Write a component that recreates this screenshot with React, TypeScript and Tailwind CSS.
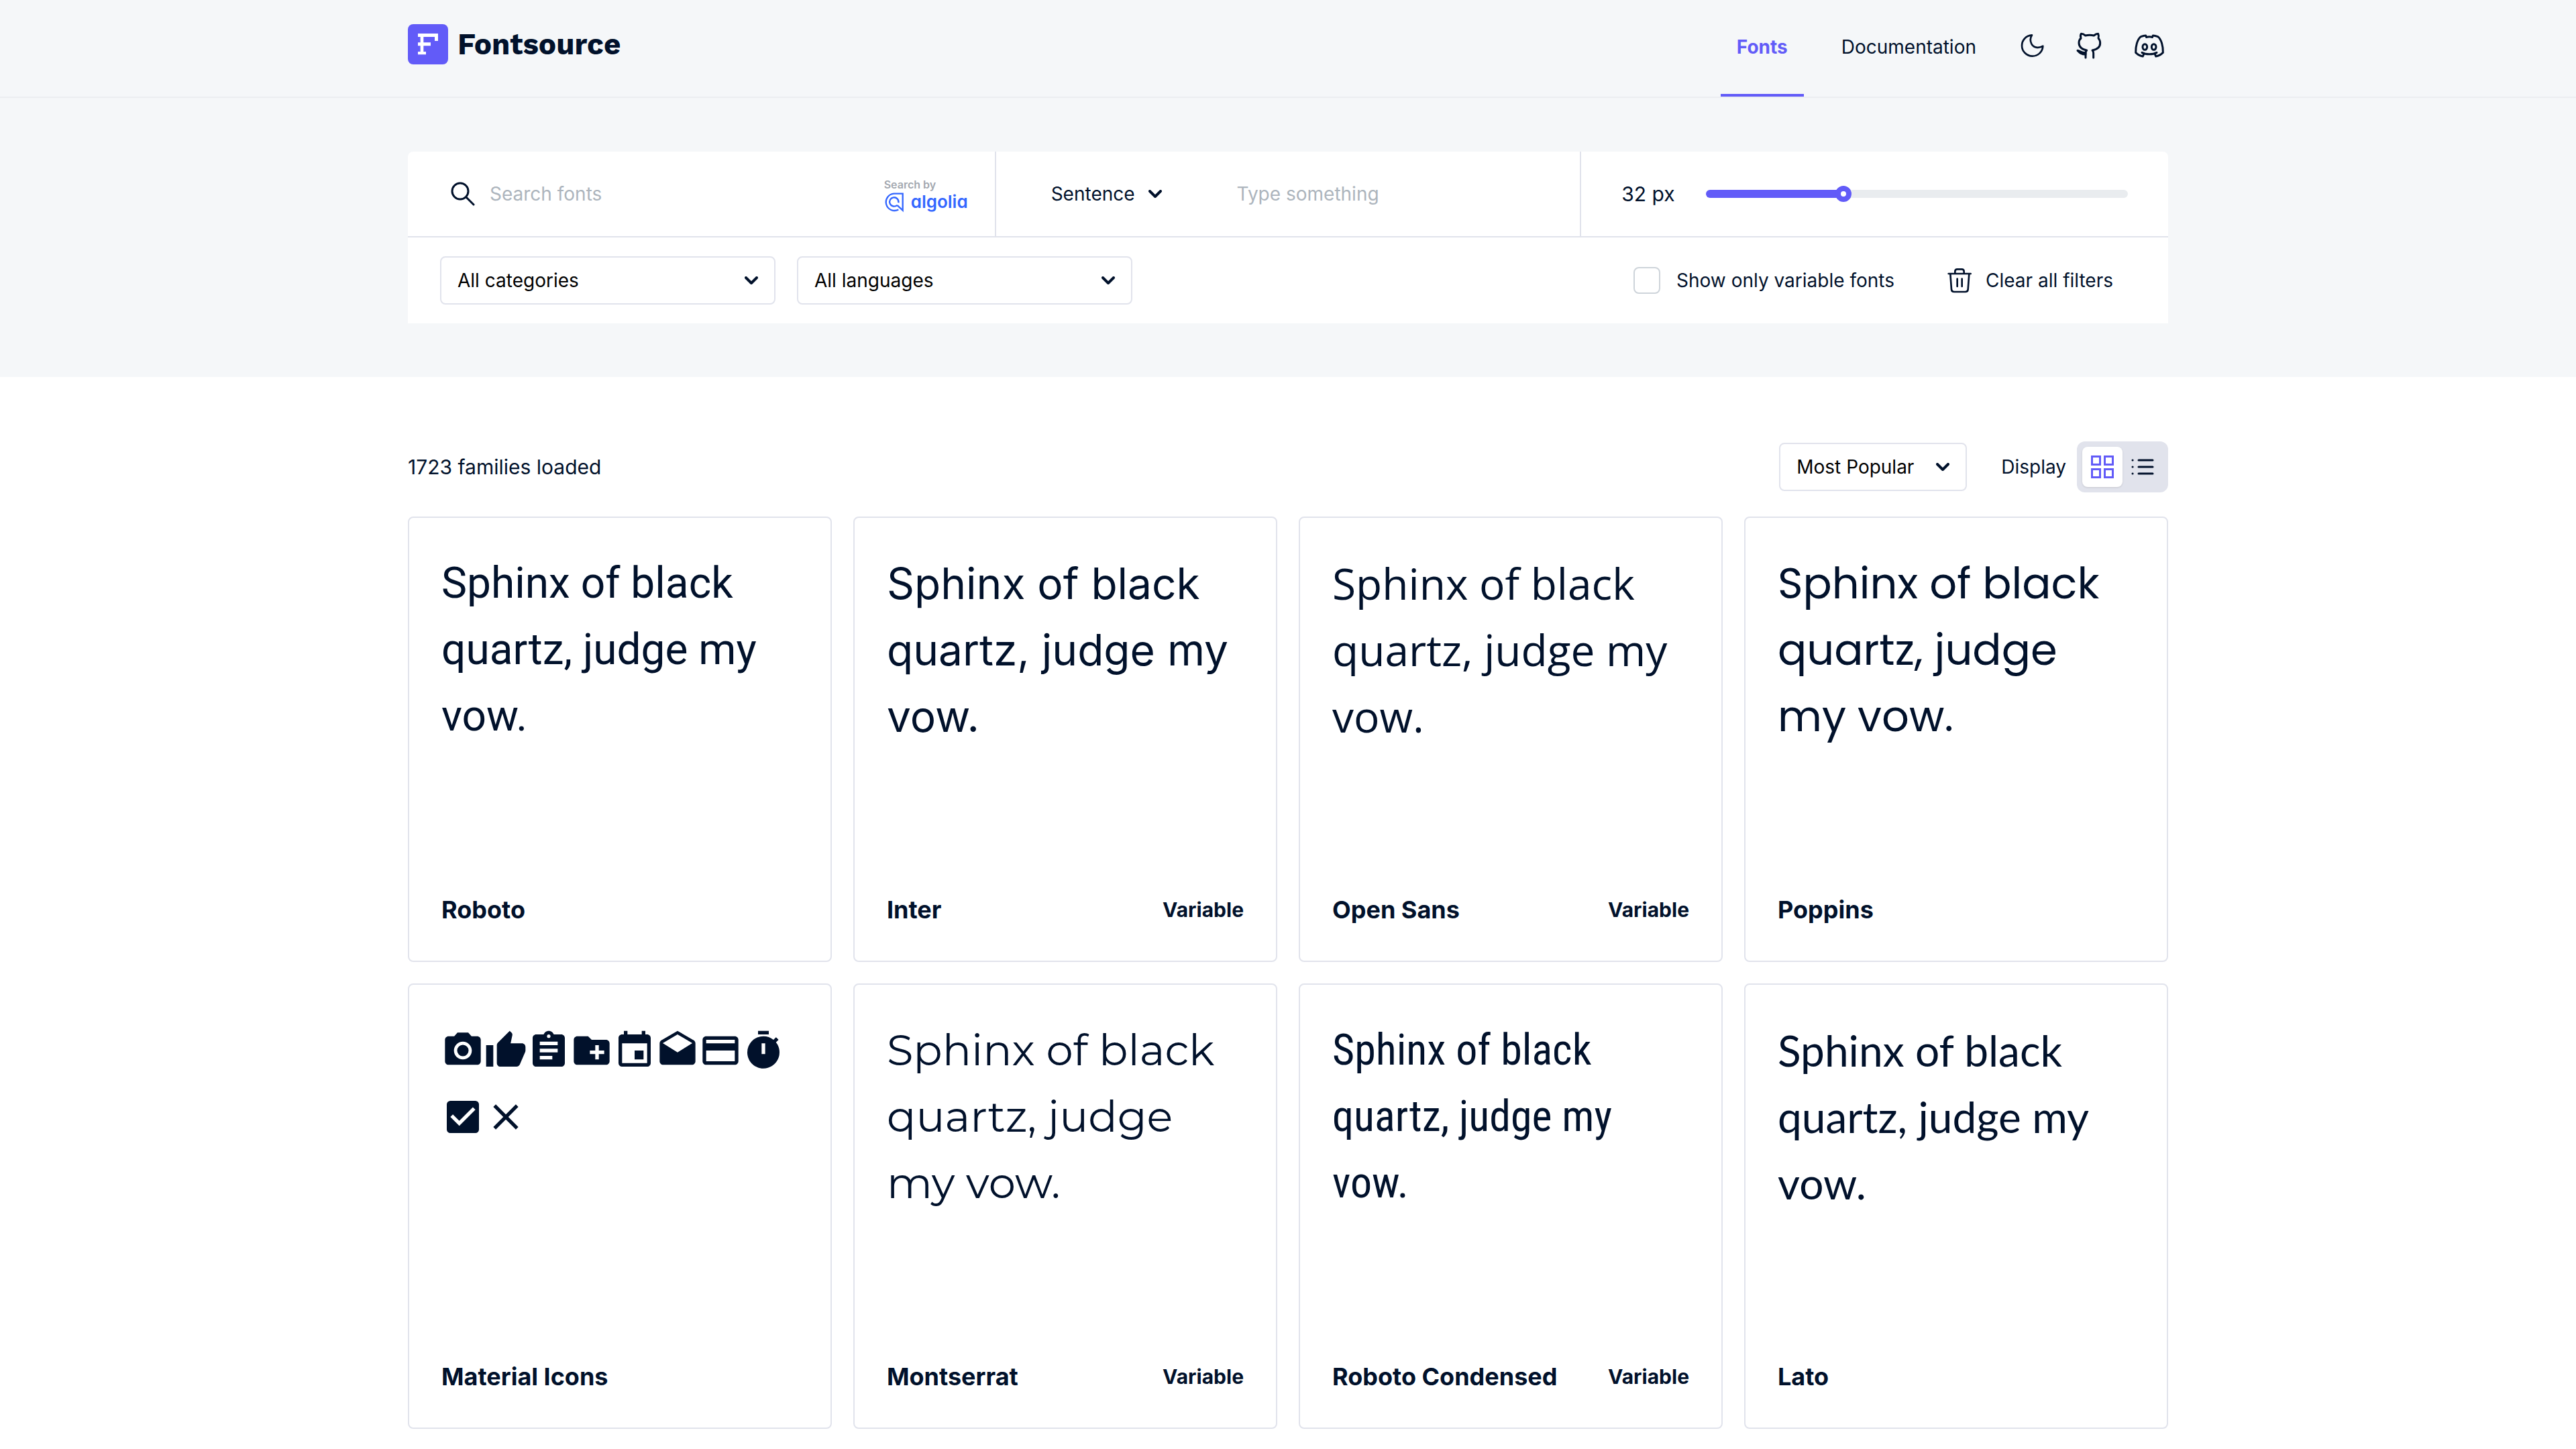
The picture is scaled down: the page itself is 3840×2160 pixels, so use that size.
import type { ReactNode } from "react";
import {
  MdAssignment,
  MdCameraAlt,
  MdCheckBox,
  MdClose,
  MdCreateNewFolder,
  MdDrafts,
  MdEvent,
  MdPayment,
  MdThumbUp,
  MdTimer,
} from "react-icons/md";

function Chevron({ className = "" }: { className?: string }) {
  return (
    <svg viewBox="0 0 20 12" className={`w-5 h-3 ${className}`} fill="none" stroke="#01112b" strokeWidth="4" strokeLinecap="round" strokeLinejoin="round" aria-hidden="true">
      <path d="M2 2l8 8 8-8" />
    </svg>
  );
}

function LogoMark() {
  return (
    <svg viewBox="0 0 180 180" className="size-15" aria-hidden="true">
      <rect width="180" height="180" rx="24" fill="#625bf8" />
      <path
        fill="#fff"
        d="M45 42H135V75H120V57H70V82H102V97H70V123H81V136H45V123H56V97H45V82H56V57H45Z"
      />
    </svg>
  );
}

function MoonIcon() {
  return (
    <svg viewBox="60 60 108 108" className="size-9" fill="none" stroke="currentColor" strokeWidth="8" strokeLinejoin="round" aria-hidden="true">
      <path d="M111 67A47 47 0 1 0 160 116C140 128 118 123 109 106C102 92 104 78 111 67Z" />
    </svg>
  );
}

function GithubIcon() {
  return (
    <svg viewBox="318 45 120 126" className="w-10 h-[42px]" fill="none" stroke="currentColor" strokeWidth="9" strokeLinecap="round" strokeLinejoin="round" aria-hidden="true">
      <path d="M363 162V141C363 137 363 133 368 129C343 124 333 110 333 95C333 86 336 80 342 75C339 67 340 60 343 55C350 55 357 59 362 63C374 60 388 60 400 63C406 58 413 55 419 55C422 62 422 68 420 75C426 81 428 87 428 97C428 113 415 125 393 129C398 133 398 137 398 142V162" />
      <path d="M327 130C338 131 341 140 363 140V147C343 147 338 141 327 130Z" fill="currentColor" />
    </svg>
  );
}

function DiscordIcon() {
  return (
    <svg viewBox="570 52 144 111" className="w-12 h-[37px]" fill="none" stroke="currentColor" strokeWidth="9" strokeLinecap="round" strokeLinejoin="round" aria-hidden="true">
      <path d="M629 68L626 61C618 61 611 63 604 66C588 78 580 110 581 137C590 146 602 152 613 154L617 144" />
      <path d="M655 68L658 61C666 61 673 63 680 66C696 78 704 110 703 137C694 146 682 152 671 154L667 144" />
      <path d="M629 68C637 66 647 66 655 68" />
      <path d="M609 137C626 147 658 147 675 137" />
      <ellipse cx="622" cy="112" rx="10" ry="13" />
      <ellipse cx="662" cy="112" rx="10" ry="13" />
    </svg>
  );
}

function SearchIcon() {
  return (
    <svg viewBox="0 0 36 36" className="size-9" fill="none" stroke="currentColor" strokeWidth="3" strokeLinecap="round" aria-hidden="true">
      <circle cx="14" cy="14" r="12" />
      <path d="M23 23L34 34" />
    </svg>
  );
}

function TrashIcon() {
  return (
    <svg viewBox="66 54 114 120" className="w-[38px] h-10" fill="none" stroke="currentColor" strokeWidth="8" strokeLinecap="round" strokeLinejoin="round" aria-hidden="true">
      <path d="M74 84H173M82 84L87 154Q88 165 99 165H149Q160 165 161 154L166 84M103 82V74Q103 64 113 64H133Q143 64 143 74V82M113 107V141M134 107V141" />
    </svg>
  );
}

function AlgoliaMark() {
  return (
    <svg viewBox="54 92 90 92" className="w-[30px] h-[31px]" fill="none" stroke="#3366ff" strokeWidth="7" aria-hidden="true">
      <path d="M118 171A38 38 0 1 1 98 99.500H137V174L112 151" />
      <path d="M112 151A20 20 0 1 1 118 140" />
    </svg>
  );
}

function GridIcon() {
  return (
    <svg viewBox="0 0 34 34" className="size-[34px]" fill="none" stroke="#625bf8" strokeWidth="3" aria-hidden="true">
      <rect x="1.500" y="1.500" width="12" height="12" />
      <rect x="20.500" y="1.500" width="12" height="12" />
      <rect x="1.500" y="20.500" width="12" height="12" />
      <rect x="20.500" y="20.500" width="12" height="12" />
    </svg>
  );
}

function ListIcon() {
  return (
    <svg viewBox="0 0 34 34" className="size-[34px]" fill="none" stroke="currentColor" strokeWidth="3" strokeLinecap="round" aria-hidden="true">
      <path d="M11 7H32M11 17H32M11 27H32" />
      <path d="M2 7h.1M2 17h.1M2 27h.1" />
    </svg>
  );
}

function SelectBox({ label, value, className }: { label: string; value: string; className: string }) {
  return (
    <div className={`relative ${className}`}>
      <select aria-label={label} className="w-full h-18 appearance-none rounded-lg border-2 border-[#e1e3ec] bg-white pl-6 pr-14 text-[28px] text-black">
        <option>{value}</option>
      </select>
      <Chevron className="pointer-events-none absolute right-[26px] top-[30px]" />
    </div>
  );
}

function FontCard({ name, variable, children }: { name: string; variable?: boolean; children: ReactNode }) {
  return (
    <a href={`#${name}`} className="flex min-h-[664px] flex-col justify-between rounded-lg border-2 border-[#e1e3ec] bg-white p-12">
      <div className="text-[64px] leading-[99px]">{children}</div>
      <div className="flex items-center justify-between font-bold leading-14">
        <h2 className="text-[36px]">{name}</h2>
        {variable && <span className="text-[30px]">Variable</span>}
      </div>
    </a>
  );
}

const iconRows = [
  [MdCameraAlt, MdThumbUp, MdAssignment, MdCreateNewFolder, MdEvent, MdDrafts, MdPayment, MdTimer],
  [MdCheckBox, MdClose],
];

const sampleWide = (
  <>
    Sphinx of black
    <br />
    quartz, judge my
    <br />
    vow.
  </>
);

const sampleNarrow = (
  <>
    Sphinx of black
    <br />
    quartz, judge
    <br />
    my vow.
  </>
);

export default function App() {
  return (
    <div className="min-h-screen bg-white font-['Inter',sans-serif] text-[28px] text-[#01112b]">
      <header className="border-b-2 border-[#eceef1] bg-[#f5f7f9]">
        <div className="mx-auto flex h-36 w-full max-w-[2624px] items-stretch justify-between">
          <a href="#home" className="flex items-center gap-3.5 pb-3">
            <LogoMark />
            <span className="font-['Work_Sans','Inter',sans-serif] text-[44px] font-bold leading-none">Fontsource</span>
          </a>
          <nav className="flex items-stretch">
            <a href="#fonts" className="flex items-center border-b-4 border-[#625bf8] px-6 font-bold text-[#625bf8]">
              Fonts
            </a>
            <a href="#documentation" className="flex items-center pl-14 pr-[66px] pb-1">
              Documentation
            </a>
            <div className="flex items-center gap-[46px] pr-1 pb-2">
              <button type="button" aria-label="Toggle dark mode">
                <MoonIcon />
              </button>
              <a href="#github" aria-label="GitHub">
                <GithubIcon />
              </a>
              <a href="#discord" aria-label="Discord">
                <DiscordIcon />
              </a>
            </div>
          </nav>
        </div>
      </header>

      <section className="bg-[#f5f7f9] py-20">
        <div className="mx-auto w-full max-w-[2624px] rounded-t-lg bg-white">
          <div className="grid grid-cols-3 border-b-2 border-[#e1e3ec]">
            <div className="flex h-[126px] items-center pl-16 pr-10">
              <SearchIcon />
              <input type="text" aria-label="Search fonts" placeholder="Search fonts" className="min-w-0 flex-1 bg-transparent pl-[22px] outline-none placeholder:text-[#adb5bd]" />
              <a href="#algolia" className="flex flex-col pt-1">
                <span className="text-[16px] font-semibold leading-5 text-[#a3a8b0]">Search by</span>
                <span className="flex items-center gap-2.5">
                  <AlgoliaMark />
                  <span className="text-[26px] font-semibold leading-8 text-[#3366ff] [font-feature-settings:'cv11']">algolia</span>
                </span>
              </a>
            </div>
            <div className="flex h-[126px] items-center border-x-2 border-[#e1e3ec] pl-[78px]">
              <button type="button" className="flex items-center gap-5 pl-1">
                Sentence
                <Chevron />
              </button>
              <input type="text" aria-label="Preview text" placeholder="Type something" className="ml-28 min-w-0 flex-1 bg-transparent outline-none placeholder:text-[#adb5bd]" />
            </div>
            <div className="flex h-[126px] items-center gap-[46px] pl-15 pr-15">
              <label htmlFor="size" className="whitespace-nowrap text-[30px]">
                32 px
              </label>
              <input
                id="size"
                type="range"
                min="0"
                max="100"
                defaultValue="32"
                className="h-6 min-w-0 flex-1 appearance-none bg-transparent [&::-webkit-slider-runnable-track]:h-3 [&::-webkit-slider-runnable-track]:rounded-full [&::-webkit-slider-runnable-track]:bg-[linear-gradient(to_right,#625bf8_33%,#e9ecef_33%)] [&::-webkit-slider-thumb]:-mt-1.5 [&::-webkit-slider-thumb]:size-6 [&::-webkit-slider-thumb]:appearance-none [&::-webkit-slider-thumb]:rounded-full [&::-webkit-slider-thumb]:border-8 [&::-webkit-slider-thumb]:border-[#625bf8] [&::-webkit-slider-thumb]:bg-white"
              />
            </div>
          </div>
          <div className="flex h-32 items-center justify-between pl-12 pr-[82px]">
            <div className="flex gap-8">
              <SelectBox label="Category" value="All categories" className="w-[500px]" />
              <SelectBox label="Language" value="All languages" className="w-[500px]" />
            </div>
            <div className="flex items-center gap-[78px]">
              <label className="flex items-center gap-6">
                <input type="checkbox" className="size-10 appearance-none rounded-lg border-2 border-[#ced4da] bg-white" />
                Show only variable fonts
              </label>
              <button type="button" className="flex items-center gap-5">
                <TrashIcon />
                Clear all filters
              </button>
            </div>
          </div>
        </div>
      </section>

      <main className="mx-auto w-full max-w-[2624px] pt-24 pb-7">
        <div className="flex items-center justify-between">
          <p className="text-[30px]">1723 families loaded</p>
          <div className="flex items-center">
            <SelectBox label="Sort" value="Most Popular" className="w-[280px]" />
            <span className="pl-[51px] pr-4">Display</span>
            <div className="flex rounded-xl bg-[#e1e3ec] p-2">
              <button type="button" aria-label="Grid view" className="flex size-15 items-center justify-center rounded-lg bg-white shadow">
                <GridIcon />
              </button>
              <button type="button" aria-label="List view" className="flex size-15 items-center justify-center">
                <ListIcon />
              </button>
            </div>
          </div>
        </div>

        <div className="mt-9 grid grid-cols-4 gap-8">
          <FontCard name="Roboto">
            <p className="font-['Roboto',sans-serif]">{sampleWide}</p>
          </FontCard>
          <FontCard name="Inter" variable>
            <p>{sampleWide}</p>
          </FontCard>
          <FontCard name="Open Sans" variable>
            <p className="font-['Open_Sans',sans-serif]">{sampleWide}</p>
          </FontCard>
          <FontCard name="Poppins">
            <p className="font-['Poppins','Inter',sans-serif]">{sampleNarrow}</p>
          </FontCard>
          <FontCard name="Material Icons">
            {iconRows.map((row, index) => (
              <div key={index} className="flex h-[99px] items-center">
                {row.map((Icon, position) => (
                  <Icon key={position} className="size-16" />
                ))}
              </div>
            ))}
          </FontCard>
          <FontCard name="Montserrat" variable>
            <p className="font-['Montserrat','Inter',sans-serif]">{sampleNarrow}</p>
          </FontCard>
          <FontCard name="Roboto Condensed" variable>
            <p className="font-['Roboto_Condensed','Liberation_Sans_Narrow',sans-serif]">{sampleWide}</p>
          </FontCard>
          <FontCard name="Lato">
            <p className="font-['Lato',sans-serif]">{sampleWide}</p>
          </FontCard>
        </div>
      </main>
    </div>
  );
}
